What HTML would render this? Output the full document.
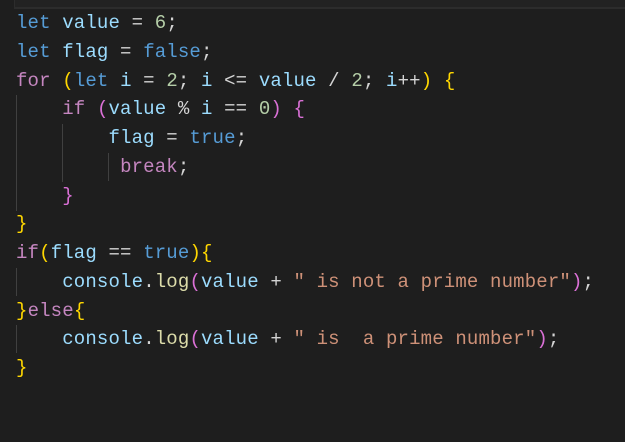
<!DOCTYPE html>
<html><head><style>
html,body{margin:0;padding:0;background:#1e1e1e;width:625px;height:442px;overflow:hidden}
.top{position:absolute;left:14px;top:0;width:620px;height:7px;background:#222;border-left:1px solid #2c2c2c;border-bottom:2px solid #2c2c2c}
pre{position:absolute;left:16px;top:9px;margin:0;font-family:"Liberation Mono",monospace;font-size:19px;line-height:28.75px;color:#d4d4d4;letter-spacing:0.16px}
.k{color:#569cd6}.v{color:#9cdcfe}.n{color:#b5cea8}.c{color:#c586c0}.y{color:#ffd700}.p{color:#da70d6}.s{color:#ce9178}.f{color:#dcdcaa}
.g{position:absolute;width:1px;background:#404040}
</style></head><body>
<div class="top"></div>
<div class="g" style="left:16px;top:95px;height:116px"></div>
<div class="g" style="left:62px;top:124px;height:58px"></div>
<div class="g" style="left:108px;top:153px;height:28px"></div>
<div class="g" style="left:16px;top:268px;height:28px"></div>
<div class="g" style="left:16px;top:325px;height:28px"></div>
<pre><span class="k">let</span> <span class="v">value</span> = <span class="n">6</span>;
<span class="k">let</span> <span class="v">flag</span> = <span class="k">false</span>;
<span class="c">for</span> <span class="y">(</span><span class="k">let</span> <span class="v">i</span> = <span class="n">2</span>; <span class="v">i</span> &lt;= <span class="v">value</span> / <span class="n">2</span>; <span class="v">i</span>++<span class="y">)</span> <span class="y">{</span>
    <span class="c">if</span> <span class="p">(</span><span class="v">value</span> % <span class="v">i</span> == <span class="n">0</span><span class="p">)</span> <span class="p">{</span>
        <span class="v">flag</span> = <span class="k">true</span>;
         <span class="c">break</span>;
    <span class="p">}</span>
<span class="y">}</span>
<span class="c">if</span><span class="y">(</span><span class="v">flag</span> == <span class="k">true</span><span class="y">){</span>
    <span class="v">console</span>.<span class="f">log</span><span class="p">(</span><span class="v">value</span> + <span class="s">" is not a prime number"</span><span class="p">)</span>;
<span class="y">}</span><span class="c">else</span><span class="y">{</span>
    <span class="v">console</span>.<span class="f">log</span><span class="p">(</span><span class="v">value</span> + <span class="s">" is  a prime number"</span><span class="p">)</span>;
<span class="y">}</span></pre>
</body></html>
